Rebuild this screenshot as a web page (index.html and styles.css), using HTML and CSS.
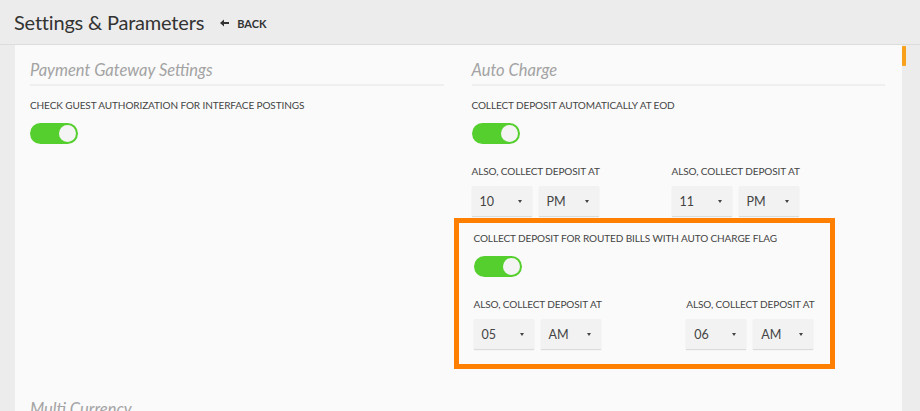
FILE: index.html
```html
<!DOCTYPE html>
<html lang="en">
<head>
    <meta charset="UTF-8">
    <meta name="viewport" content="width=device-width, initial-scale=1.0">
    <title>Settings &amp; Parameters</title>
    <link rel="stylesheet" href="styles.css">
</head>
<body>
    <header class="page-header">
        <h1>Settings &amp; Parameters</h1>
        <a class="back-link" href="#">
            <svg width="9" height="8" viewBox="0 0 9 8"><path d="M0 4 L4 0.5 L4 3 L9 3 L9 5 L4 5 L4 7.5 Z" fill="#333"/></svg>
            BACK
        </a>
    </header>

    <div class="scroll-thumb"></div>

    <main class="card">
        <div class="sections">
            <section class="section">
                <h2 class="section-title">Payment Gateway Settings</h2>
                <div class="field-label">Check guest authorization for interface postings</div>
                <div class="toggle on"><span class="knob"></span></div>
            </section>

            <section class="section">
                <h2 class="section-title">Auto Charge</h2>
                <div class="field-label">Collect deposit automatically at EOD</div>
                <div class="toggle on"><span class="knob"></span></div>

                <div class="time-row">
                    <div class="time-group">
                        <div class="field-label">Also, collect deposit at</div>
                        <div class="selects">
                            <div class="select">10<span class="caret"></span></div>
                            <div class="select">PM<span class="caret"></span></div>
                        </div>
                    </div>
                    <div class="time-group">
                        <div class="field-label">Also, collect deposit at</div>
                        <div class="selects">
                            <div class="select">11<span class="caret"></span></div>
                            <div class="select">PM<span class="caret"></span></div>
                        </div>
                    </div>
                </div>

                <div class="highlight">
                    <div class="field-label">Collect deposit for routed bills with auto charge flag</div>
                    <div class="toggle on"><span class="knob"></span></div>

                    <div class="time-row spread">
                        <div class="time-group">
                            <div class="field-label">Also, collect deposit at</div>
                            <div class="selects">
                                <div class="select">05<span class="caret"></span></div>
                                <div class="select">AM<span class="caret"></span></div>
                            </div>
                        </div>
                        <div class="time-group">
                            <div class="field-label">Also, collect deposit at</div>
                            <div class="selects">
                                <div class="select">06<span class="caret"></span></div>
                                <div class="select">AM<span class="caret"></span></div>
                            </div>
                        </div>
                    </div>
                </div>
            </section>

            <section class="section">
                <h2 class="section-title">Multi Currency</h2>
                <div class="field-label">Enable multi currency</div>
                <div class="toggle"><span class="knob"></span></div>
            </section>
        </div>
    </main>
</body>
</html>
```

FILE: styles.css
```css
html, body {
    height: 100%;
}
body {
    margin: 0;
    overflow: hidden;
    font-family: Lato, "Open Sans", sans-serif;
    background-color: #ececec;
    color: #333;
    position: relative;
}
.page-header {
    height: 45px;
    border-bottom: 1px solid #dddddd;
    display: flex;
    align-items: center;
    padding-left: 14px;
    box-sizing: border-box;
}
.page-header h1 {
    margin: 0;
    font-size: 20px;
    letter-spacing: -0.2px;
    font-weight: 400;
    color: #333;
}
.back-link {
    margin-left: 16px;
    display: flex;
    align-items: center;
    gap: 8px;
    font-size: 11px;
    font-weight: 700;
    color: #333;
    text-decoration: none;
    margin-top: 2px;
}
.scroll-thumb {
    position: absolute;
    top: 46px;
    right: 14px;
    width: 4px;
    height: 20px;
    background-color: #f9a11b;
    border-radius: 1px;
}
.card {
    display: block;
    margin: 0 18px 0 15px;
    min-height: 600px;
    background-color: #fafafa;
    padding: 15px 17px 0 15px;
}
.sections {
    display: grid;
    grid-template-columns: 1fr 1fr;
    column-gap: 28px;
    row-gap: 30px;
}
.section-title {
    margin: 0;
    font-size: 16.5px;
    line-height: 20px;
    font-weight: 400;
    font-style: italic;
    color: #a3a3a3;
    padding-bottom: 4px;
    border-bottom: 2px solid #efefef;
}
.field-label {
    margin-top: 12px;
    font-size: 10px;
    letter-spacing: -0.1px;
    line-height: 14px;
    text-transform: uppercase;
    color: #444;
}
.toggle {
    margin-top: 11px;
    width: 48px;
    height: 21px;
    border-radius: 11px;
    background-color: #dcdcdc;
    position: relative;
}
.toggle.on {
    background-color: #55cf2d;
}
.knob {
    position: absolute;
    top: 2px;
    left: 2px;
    width: 17px;
    height: 17px;
    border-radius: 50%;
    background-color: #f4f4f4;
}
.toggle.on .knob {
    left: auto;
    right: 2px;
}
.time-row {
    display: flex;
    margin-top: 8px;
}
.time-row .time-group {
    width: 200px;
}
.time-row .field-label {
    margin-top: 12px;
}
.time-row.spread {
    justify-content: space-between;
    margin-top: 8px;
}
.time-row.spread .time-group {
    width: auto;
}
.selects {
    display: flex;
    gap: 7px;
    margin-top: 8px;
}
.select {
    width: 60px;
    height: 30px;
    box-sizing: border-box;
    padding-left: 8px;
    display: flex;
    align-items: center;
    justify-content: space-between;
    padding-right: 10px;
    font-size: 12.5px;
    color: #444;
    background-color: #f2f2f2;
    box-shadow: 0 1px 1px rgba(0,0,0,0.12);
}
.caret {
    width: 0;
    height: 0;
    border-left: 2.5px solid transparent;
    border-right: 2.5px solid transparent;
    border-top: 3px solid #444;
}
.highlight {
    width: 381px;
    box-sizing: border-box;
    margin-top: 2px;
    margin-left: -18px;
    border: 5px solid #ff8000;
    padding: 3px 15px 15px 15px;
}
.highlight > .field-label:first-child {
    margin-top: 5px;
}
.highlight .toggle {
    margin-top: 11px;
}
```
